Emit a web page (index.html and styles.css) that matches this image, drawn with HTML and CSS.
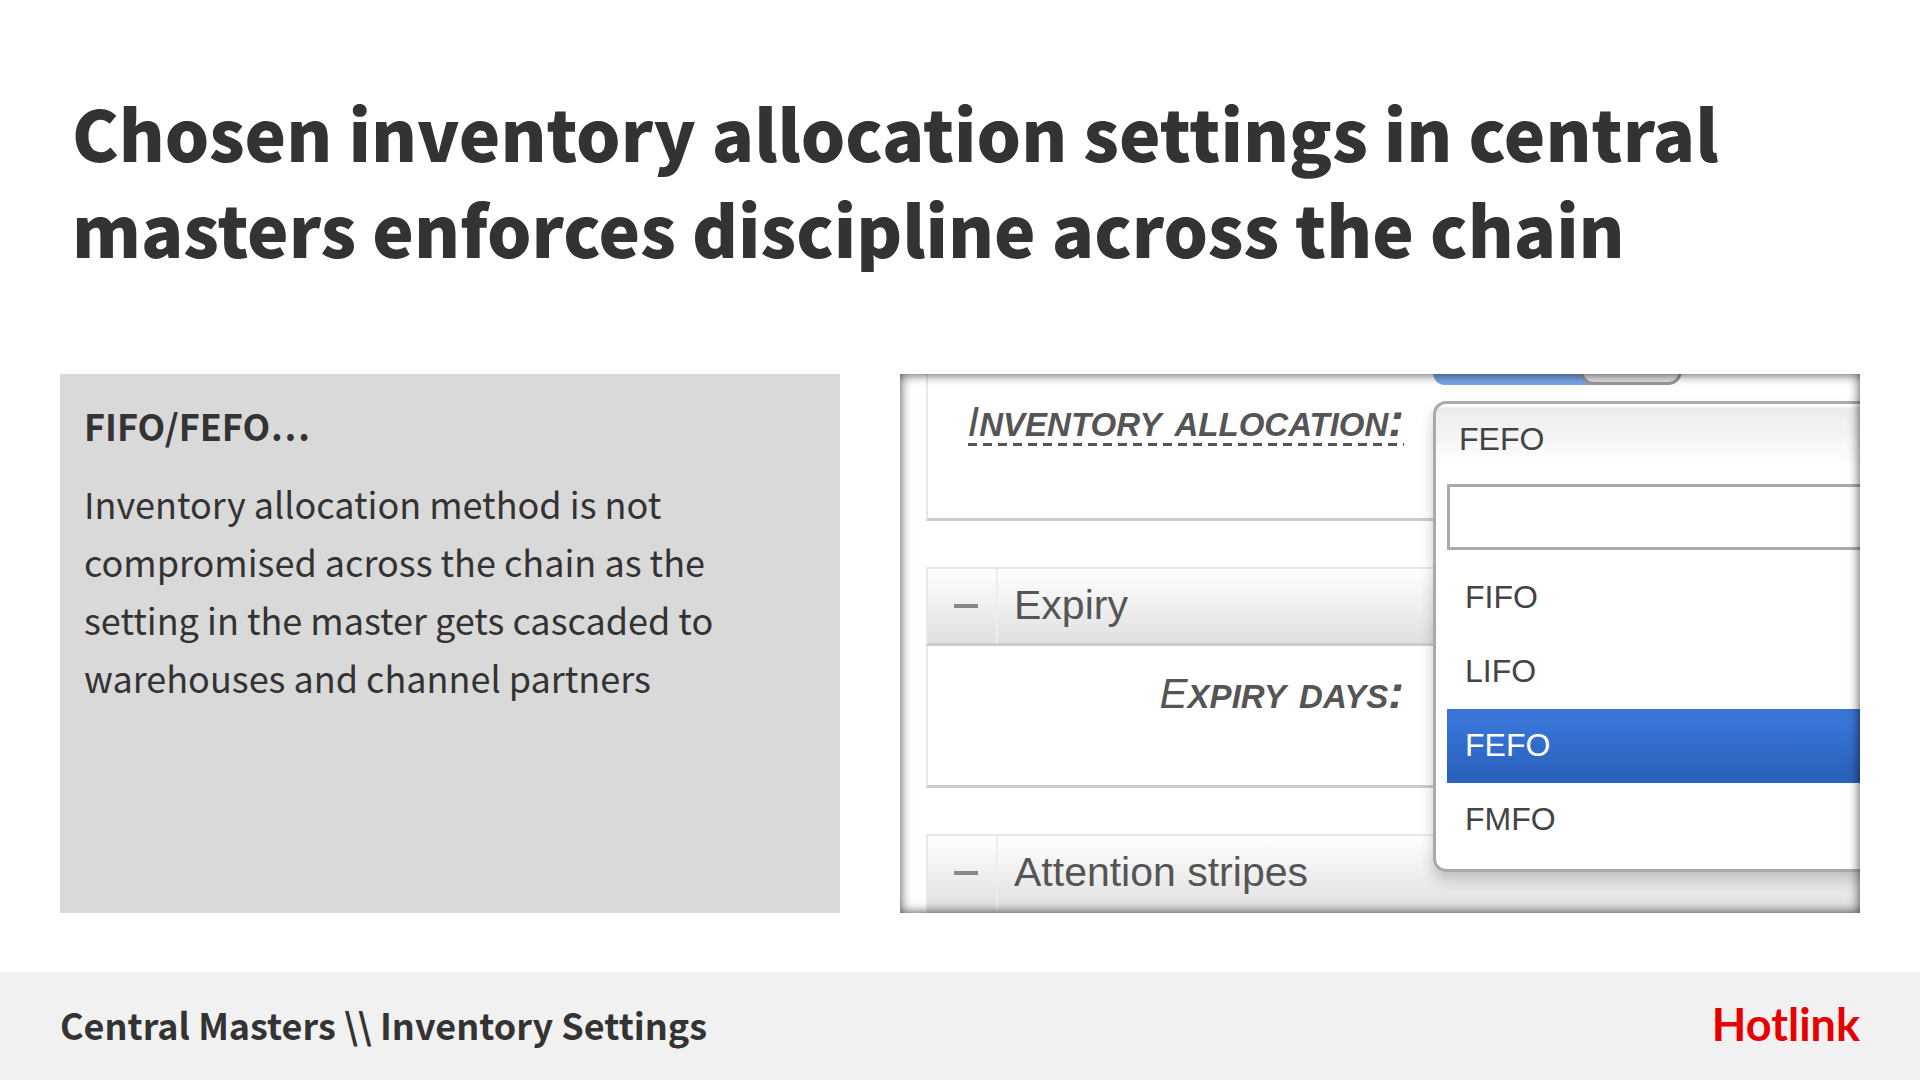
FILE: index.html
```html
<!DOCTYPE html>
<html lang="en">
<head>
  <meta charset="utf-8">
  <meta name="viewport" content="width=device-width, initial-scale=1">
  <title>Central Masters – Inventory Settings</title>
  <link rel="stylesheet" href="styles.css">
</head>
<body>
  <main class="slide">
    <h1 class="headline">Chosen inventory allocation settings in central<br>masters enforces discipline across the chain</h1>

    <div class="columns">
      <section class="note">
        <h2 class="note-title">FIFO/FEFO…</h2>
        <p class="note-text">Inventory allocation method is not<br>compromised across the chain as the<br>setting in the master gets cascaded to<br>warehouses and channel partners</p>
      </section>

      <section class="shot" aria-label="Inventory settings">
        <div class="group group-first">
          <label class="field-label dashed" for="allocation">Inventory allocation:</label>
        </div>

        <div class="group-head">
          <button class="collapse" type="button" aria-label="Collapse Expiry"><span class="minus"></span></button>
          <h3 class="group-title">Expiry</h3>
        </div>
        <div class="group">
          <span class="field-label">Expiry days:</span>
        </div>

        <div class="group-head group-head-last">
          <button class="collapse" type="button" aria-label="Collapse Attention stripes"><span class="minus"></span></button>
          <h3 class="group-title">Attention stripes</h3>
        </div>

        <div class="toggle"><span class="toggle-knob"></span></div>

        <div class="dropdown">
          <button class="dropdown-value" id="allocation" type="button">FEFO</button>
          <input class="dropdown-search" type="text" aria-label="Search allocation methods">
          <ul class="options">
            <li><button class="option" type="button">FIFO</button></li>
            <li><button class="option" type="button">LIFO</button></li>
            <li><button class="option selected" type="button">FEFO</button></li>
            <li><button class="option" type="button">FMFO</button></li>
          </ul>
        </div>
      </section>
    </div>
  </main>

  <footer class="footer">
    <p class="crumbs">Central Masters \\ Inventory Settings</p>
    <span class="brand">Hotlink</span>
  </footer>
</body>
</html>
```

FILE: styles.css
```css
* {
  box-sizing: border-box;
}

body {
  margin: 0;
  min-height: 100vh;
  display: flex;
  flex-direction: column;
  background: #fff;
  color: #333;
  font-family: "Noto Sans CJK SC", "Open Sans", sans-serif;
}

h1, h2, h3, p, ul {
  margin: 0;
  padding: 0;
}

.slide {
  flex: 1;
  display: flex;
  flex-direction: column;
  padding: 84px 60px 59px;
}

.headline {
  padding: 0 12px;
  font-size: 70px;
  line-height: 96px;
  font-weight: 900;
  white-space: nowrap;
}

.columns {
  flex: 1;
  display: grid;
  grid-template-columns: 13fr 16fr;
  gap: 60px;
  margin-top: 98px;
}

.note {
  padding: 22px 24px;
  background: #d9d9d9;
}

.note-title {
  font-size: 36px;
  line-height: 58px;
  font-weight: 700;
}

.note-text {
  margin-top: 20px;
  font-size: 36px;
  line-height: 58px;
}

/* Settings form, cropped by its frame */
.shot {
  position: relative;
  overflow: hidden;
  min-width: 0;
  padding-left: 26px;
  display: flex;
  flex-direction: column;
  background: #fff;
  color: #555;
  font-family: "Liberation Sans", Arial, sans-serif;
}

.shot::after {
  content: "";
  position: absolute;
  inset: 0;
  box-shadow: inset 0 0 12px rgba(0, 0, 0, 0.75);
  pointer-events: none;
}

.group {
  height: 142px;
  margin-bottom: 46px;
  padding-top: 22px;
  border-left: 2px solid #e8e8e8;
  border-bottom: 3px solid #ccc;
}

.group-first {
  height: 147px;
}

.field-label {
  display: block;
  width: fit-content;
  min-width: 240px;
  margin-left: auto;
  margin-right: 456px;
  text-align: right;
  font-size: 47px;
  line-height: 48px;
  font-weight: 700;
  font-style: italic;
  font-variant: small-caps;
  white-space: nowrap;
}

.field-label::first-letter {
  font-size: 42px;
  font-weight: 400;
}

.dashed {
  background: repeating-linear-gradient(to right, #555 0 9px, transparent 9px 15px) left bottom / 100% 3px no-repeat;
}

.group-head {
  flex: none;
  height: 79px;
  display: flex;
  border: solid #e8e8e8;
  border-width: 2px 0 0 2px;
  border-bottom: 3px solid #ccc;
  background: linear-gradient(#fff, #e0e0e0);
}

.group-head-last {
  border-bottom-color: #e0e0e0;
}

.collapse {
  width: 70px;
  padding: 0;
  display: grid;
  place-items: center;
  border: 0;
  border-right: 2px solid #eee;
  background: none;
}

.minus {
  width: 24px;
  height: 4px;
  margin-left: 8px;
  background: #888;
}

.group-title {
  padding-left: 16px;
  font-size: 41px;
  line-height: 72px;
  font-weight: 400;
}

.toggle {
  position: absolute;
  left: 533px;
  top: -41px;
  width: 249px;
  height: 52px;
  border-radius: 12px;
  background: linear-gradient(to right, #79a5e4 160px, transparent 160px);
}

.toggle-knob {
  display: block;
  width: 102px;
  height: 52px;
  margin-left: auto;
  border: 3px solid #999;
  border-radius: 14px;
  background: #e3e3e3;
}

.dropdown {
  position: absolute;
  left: 533px;
  top: 27px;
  right: -40px;
  height: 471px;
  padding: 0 11px;
  display: flex;
  flex-direction: column;
  border: 3px solid #aaa;
  border-radius: 13px;
  background: linear-gradient(#fff 2px, #ebebeb 4px, #fff 62px);
  box-shadow: 0 8px 14px rgba(0, 0, 0, 0.2);
}

.dropdown-value {
  height: 80px;
  padding: 0 0 10px 12px;
  border: 0;
  background: none;
  color: #444;
  font: 32px "Liberation Sans", Arial, sans-serif;
  text-align: left;
}

.dropdown-search {
  height: 66px;
  border: 3px solid #aaa;
  background: #fff;
  font: 32px "Liberation Sans", Arial, sans-serif;
}

.options {
  margin-top: 11px;
  list-style: none;
}

.option {
  display: block;
  width: 100%;
  height: 74px;
  padding: 0 18px 2px;
  border: 0;
  background: none;
  color: #444;
  font: 32px "Liberation Sans", Arial, sans-serif;
  text-align: left;
}

.selected {
  background: linear-gradient(#3875d7 20%, #2a62bc 90%);
  color: #fff;
}

.footer {
  height: 108px;
  padding: 0 60px 4px;
  display: flex;
  align-items: center;
  justify-content: space-between;
  background: #f1f1f1;
}

.crumbs {
  font-size: 36px;
  line-height: 58px;
  font-weight: 700;
}

.brand {
  color: #e60000;
  font-family: Lato, sans-serif;
  font-size: 45px;
  line-height: 58px;
  font-weight: 700;
}
```
